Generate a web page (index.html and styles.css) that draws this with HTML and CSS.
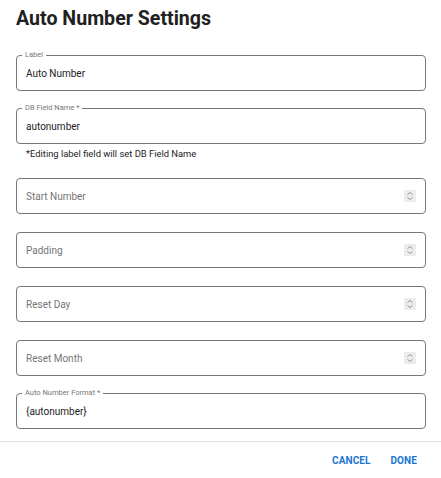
FILE: index.html
```html
<!DOCTYPE html>
<html>
<head>
<meta charset="utf-8">
<link rel="stylesheet" href="styles.css">
</head>
<body>
<div class="dialog">
  <h1 class="title">Auto Number Settings</h1>
  <div class="content">
    <div class="field">
      <span class="field-label">Label</span>
      <span class="value">Auto Number</span>
    </div>
    <div class="group">
      <div class="field">
        <span class="field-label">DB Field Name *</span>
        <span class="value">autonumber</span>
      </div>
      <div class="helper">*Editing label field will set DB Field Name</div>
    </div>
    <div class="field">
      <span class="placeholder">Start Number</span>
      <span class="spinner"><svg width="8" height="10" viewBox="0 0 8 10"><path d="M1.5 3.5 L4 1.5 L6.5 3.5 M1.5 6.5 L4 8.5 L6.5 6.5" fill="none" stroke="#8a8a8a" stroke-width="0.9"/></svg></span>
    </div>
    <div class="field">
      <span class="placeholder">Padding</span>
      <span class="spinner"><svg width="8" height="10" viewBox="0 0 8 10"><path d="M1.5 3.5 L4 1.5 L6.5 3.5 M1.5 6.5 L4 8.5 L6.5 6.5" fill="none" stroke="#8a8a8a" stroke-width="0.9"/></svg></span>
    </div>
    <div class="field">
      <span class="placeholder">Reset Day</span>
      <span class="spinner"><svg width="8" height="10" viewBox="0 0 8 10"><path d="M1.5 3.5 L4 1.5 L6.5 3.5 M1.5 6.5 L4 8.5 L6.5 6.5" fill="none" stroke="#8a8a8a" stroke-width="0.9"/></svg></span>
    </div>
    <div class="field">
      <span class="placeholder">Reset Month</span>
      <span class="spinner"><svg width="8" height="10" viewBox="0 0 8 10"><path d="M1.5 3.5 L4 1.5 L6.5 3.5 M1.5 6.5 L4 8.5 L6.5 6.5" fill="none" stroke="#8a8a8a" stroke-width="0.9"/></svg></span>
    </div>
    <div class="field field-last">
      <span class="field-label">Auto Number Format *</span>
      <span class="value">{autonumber}</span>
    </div>
  </div>
  <div class="actions">
    <span class="btn">CANCEL</span>
    <span class="btn">DONE</span>
  </div>
</div>
</body>
</html>
```
FILE: styles.css
```css
* { box-sizing: border-box; }
html, body { margin: 0; padding: 0; background: #fff; }
body { font-family: Roboto, "Liberation Sans", sans-serif; color: #222; }
.dialog { width: 441px; }
.title {
  margin: 0;
  padding: 7px 16px 0;
  font-size: 19.6px;
  line-height: 23px;
  font-weight: 700;
  color: #212121;
}
.content {
  padding: 25px 15px 12px 16px;
  display: flex;
  flex-direction: column;
  gap: 18px;
}
.content > .field:first-child { margin-bottom: -1px; }
.field-last { margin-top: -1px; }
.field {
  position: relative;
  height: 36px;
  border: 1px solid #777;
  border-radius: 4px;
  display: flex;
  align-items: center;
  justify-content: space-between;
  padding: 0 9px;
}
.field-label {
  position: absolute;
  top: -6px;
  left: 5px;
  padding: 0 3px;
  background: #fff;
  font-size: 7.5px;
  line-height: 10px;
  color: #777;
}
.value { font-size: 10px; color: #222; }
.placeholder { font-size: 10px; color: #757575; }
.spinner {
  width: 12px;
  height: 12px;
  background: #ececec;
  display: flex;
  align-items: center;
  justify-content: center;
}
.helper {
  margin-top: 4px;
  padding-left: 10px;
  font-size: 9.4px;
  line-height: 12px;
  color: #222;
}
.actions {
  border-top: 1px solid #e0e0e0;
  height: 37px;
  display: flex;
  justify-content: flex-end;
  align-items: center;
  gap: 20px;
  padding-right: 24px;
}
.btn {
  font-size: 10px;
  font-weight: 700;
  color: #1976d2;
  letter-spacing: 0.1px;
}
```
